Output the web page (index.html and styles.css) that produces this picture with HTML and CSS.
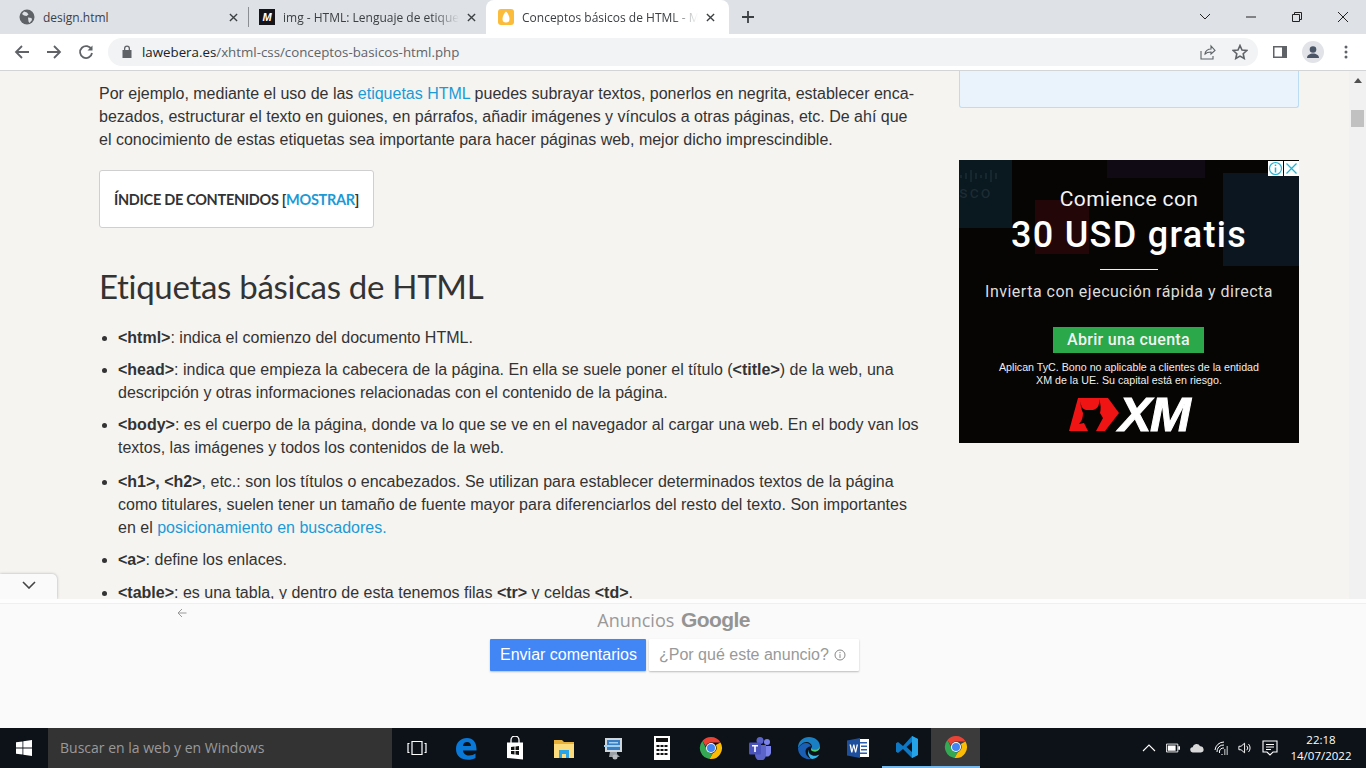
FILE: index.html
```html
<!DOCTYPE html>
<html lang="es">
<head>
    <meta charset="UTF-8">
    <meta name="viewport" content="width=device-width, initial-scale=1.0">
    <title>Conceptos básicos de HTML</title>
    <link rel="stylesheet" href="styles.css">
</head>
<body>
    <svg class="defs" width="0" height="0">
        <symbol id="chrome" viewBox="0 0 24 24">
            <path fill="#ea4335" d="M12 1a11 11 0 0 1 9.5 5.5H12a5.5 5.5 0 0 0-5.2 3.7L3.4 5A11 11 0 0 1 12 1z"/>
            <path fill="#34a853" d="M3.4 5l4.7 8.9a5.5 5.5 0 0 0 5.600 3.400L10.500 22.900A11 11 0 0 1 3.400 5z"/>
            <path fill="#fbbc05" d="M21.500 6.500A11 11 0 0 1 10.500 22.900l3.300-5.700A5.500 5.500 0 0 0 16.800 9z"/>
            <circle cx="12" cy="12" r="5" fill="#fff"/>
            <circle cx="12" cy="12" r="4" fill="#4285f4"/>
        </symbol>
    </svg>

    <!-- Tabs -->
    <div class="tabstrip">
        <div class="tab tab-first">
            <svg class="favicon" viewBox="0 0 16 16"><circle cx="8" cy="8" r="7.500" fill="#5f6368"/><path fill="#dee1e6" d="M5 2.500l3 1 1.500 2-2 1.500-2.500-.5-2-1.500zM9 8.500l3.500.5.5 2-2.500 3-1-1.500z"/></svg>
            <span class="tab-title">design.html</span>
            <svg class="tab-close" viewBox="0 0 10 10"><path d="M1 1l8 8M9 1l-8 8"/></svg>
        </div>
        <span class="tab-sep"></span>
        <div class="tab tab-second">
            <span class="favicon mdn">M</span>
            <span class="tab-title">img - HTML: Lenguaje de etiquet</span>
            <svg class="tab-close" viewBox="0 0 10 10"><path d="M1 1l8 8M9 1l-8 8"/></svg>
        </div>
        <div class="tab tab-active">
            <svg class="favicon" viewBox="0 0 16 16"><rect width="16" height="16" rx="3" fill="#fbbc3c"/><path fill="#fff" d="M8 2.500c2 1.500 3.500 5 3.500 7.500a3.500 3.500 0 0 1-7 0c0-2.500 1.500-6 3.500-7.500z"/></svg>
            <span class="tab-title">Conceptos básicos de HTML - Ma</span>
            <svg class="tab-close" viewBox="0 0 10 10"><path d="M1 1l8 8M9 1l-8 8"/></svg>
        </div>
        <svg class="new-tab" viewBox="0 0 12 12"><path d="M6 0v12M0 6h12"/></svg>
        <div class="window-controls">
            <svg viewBox="0 0 46 14"><path d="M18 4l5 5 5-5"/></svg>
            <svg viewBox="0 0 46 14"><path d="M18 7h10"/></svg>
            <svg viewBox="0 0 46 14"><path d="M18.500 4.500h7v7h-7zM20.500 4.500v-2h7v7h-2"/></svg>
            <svg viewBox="0 0 46 14"><path d="M18 2l10 10M28 2l-10 10"/></svg>
        </div>
    </div>

    <!-- Toolbar -->
    <div class="toolbar">
        <svg class="tool" viewBox="0 0 16 16"><path d="M15 8H2M8 2L2 8l6 6"/></svg>
        <svg class="tool" viewBox="0 0 16 16"><path d="M1 8h13M8 2l6 6-6 6"/></svg>
        <svg class="tool" viewBox="0 0 16 16"><path d="M13.500 5.500A6 6 0 1 0 14 9"/><path class="solid" d="M14.500 1.500v5h-5z"/></svg>
        <div class="omnibox">
            <svg class="lock" viewBox="0 0 10 13"><path d="M2 5V3.500a3 3 0 0 1 6 0V5h1.500v8H.5V5zm1.300 0h3.400V3.500a1.700 1.700 0 0 0-3.400 0z"/></svg>
            <span class="url"><span class="url-host">lawebera.es</span>/xhtml-css/conceptos-basicos-html.php</span>
            <svg class="omni-icon" viewBox="0 0 16 16"><path d="M1 7v8h12v-3M5 10c0-3 3-5 6-5V2l4 4.500L11 10V8c-2.500 0-4.500.5-6 2z"/></svg>
            <svg class="omni-icon star" viewBox="0 0 16 16"><path d="M8 1.500l2 4.500 4.800.5-3.600 3.200 1 4.800L8 12.100l-4.200 2.400 1-4.800L1.200 6.500 6 6z"/></svg>
        </div>
        <svg class="panel" viewBox="0 0 14 12"><path fill="#5f6368" d="M0 0h14v12H0z"/><path fill="#fff" d="M1.500 1.500H9v9H1.500z"/></svg>
        <svg class="avatar" viewBox="0 0 22 22"><circle cx="11" cy="11" r="11" fill="#e1e3e8"/><circle cx="11" cy="8.500" r="3.300" fill="#4a5568"/><path fill="#4a5568" d="M5 17c0-3 3-4.500 6-4.500s6 1.500 6 4.500z"/></svg>
        <svg class="menu" viewBox="0 0 4 14"><circle cx="2" cy="2" r="1.500"/><circle cx="2" cy="7" r="1.500"/><circle cx="2" cy="12" r="1.500"/></svg>
    </div>

    <!-- Page -->
    <div class="viewport">
        <div class="page">
            <main class="article">
                <p>Por ejemplo, mediante el uso de las <a href="#">etiquetas HTML</a> puedes subrayar textos, ponerlos en negrita, establecer enca-<br>bezados, estructurar el texto en guiones, en párrafos, añadir imágenes y vínculos a otras páginas, etc. De ahí que<br>el conocimiento de estas etiquetas sea importante para hacer páginas web, mejor dicho imprescindible.</p>
                <div class="toc">ÍNDICE DE CONTENIDOS [<a href="#">MOSTRAR</a>]</div>
                <h2>Etiquetas básicas de HTML</h2>
                <ul>
                    <li><b>&lt;html&gt;</b>: indica el comienzo del documento HTML.</li>
                    <li><b>&lt;head&gt;</b>: indica que empieza la cabecera de la página. En ella se suele poner el título (<b>&lt;title&gt;</b>) de la web, una<br>descripción y otras informaciones relacionadas con el contenido de la página.</li>
                    <li class="gap-wide"><b>&lt;body&gt;</b>: es el cuerpo de la página, donde va lo que se ve en el navegador al cargar una web. En el body van los<br>textos, las imágenes y todos los contenidos de la web.</li>
                    <li><b>&lt;h1&gt;, &lt;h2&gt;</b>, etc.: son los títulos o encabezados. Se utilizan para establecer determinados textos de la página<br>como titulares, suelen tener un tamaño de fuente mayor para diferenciarlos del resto del texto. Son importantes<br>en el <a href="#">posicionamiento en buscadores.</a></li>
                    <li class="gap-mid"><b>&lt;a&gt;</b>: define los enlaces.</li>
                    <li><b>&lt;table&gt;</b>: es una tabla, y dentro de esta tenemos filas <b>&lt;tr&gt;</b> y celdas <b>&lt;td&gt;</b>.</li>
                </ul>
            </main>

            <aside class="sidebar">
                <div class="note"></div>
                <div class="ad">
                    <span class="ad-bg ad-bg-cisco">
                        <svg viewBox="0 0 38 12"><path d="M2 5v3M7 3v6M12 0v12M17 3v6M22 5v3M27 3v6M32 0v12M37 3v6"/></svg>
                        sco
                    </span>
                    <span class="ad-bg ad-bg-red"></span>
                    <span class="ad-bg ad-bg-purple"></span>
                    <span class="ad-bg ad-bg-blue"></span>
                    <div class="ad-badges">
                        <svg viewBox="0 0 15 15"><circle cx="7.500" cy="7.500" r="6" fill="none" stroke="#1eb4d8" stroke-width="1.200"/><path stroke="#1eb4d8" stroke-width="1.500" d="M7.500 6.500v5M7.500 3.500v1.500"/></svg>
                        <svg viewBox="0 0 15 15"><path stroke="#1eb4d8" stroke-width="1.300" d="M2.500 2.500l10 10M12.500 2.500l-10 10"/></svg>
                    </div>
                    <div class="ad-intro">Comience con</div>
                    <div class="ad-title">30 USD gratis</div>
                    <div class="ad-rule"></div>
                    <div class="ad-sub">Invierta con ejecución rápida y directa</div>
                    <div class="ad-cta">Abrir una cuenta</div>
                    <div class="ad-legal">Aplican TyC. Bono no aplicable a clientes de la entidad<br>XM de la UE. Su capital está en riesgo.</div>
                    <div class="ad-logo">
                        <svg viewBox="0 0 50 33"><path fill="#f01414" d="M9 0h30l11 15-14 18H0z"/><path fill="#070404" d="M12 1c-1 6 1 10 5 11h7c4-1 7-4 6-11 2 6 2 10 1 14l3 5-7 13h-8l-4-8-5 1c3-3 4-7 4-11-2-4-3-9-2-14z"/></svg>
                        <span>XM</span>
                    </div>
                </div>
            </aside>
        </div>

        <div class="scrollbar">
            <svg viewBox="0 0 8 5"><path d="M4 0l4 5H0z"/></svg>
            <span class="scroll-thumb"></span>
        </div>

        <!-- Anchor ad -->
        <div class="anchor-toggle">
            <svg viewBox="0 0 14 8"><path d="M1 1l6 6 6-6"/></svg>
        </div>
        <div class="anchor">
            <div class="anchor-strip"></div>
            <svg class="anchor-back" viewBox="0 0 10 10"><path d="M9.500 5H1M5 1L1 5l4 4"/></svg>
            <div class="anchor-label">Anuncios <span class="google">Google</span></div>
            <div class="anchor-buttons">
                <span class="btn btn-blue">Enviar comentarios</span>
                <span class="btn btn-white">¿Por qué este anuncio?
                    <svg viewBox="0 0 12 12"><circle cx="6" cy="6" r="5"/><path d="M6 5.200v3.800M6 3v1.200"/></svg>
                </span>
            </div>
        </div>
    </div>

    <!-- Taskbar -->
    <div class="taskbar">
        <div class="start">
            <svg viewBox="0 0 16 16"><path fill="#fff" d="M0 2.300l6.500-.9v6.200H0zM7.300 1.300L16 0v7.600H7.300zM0 8.400h6.500v6.200L0 13.700zM7.300 8.400H16V16l-8.700-1.300z"/></svg>
        </div>
        <div class="search">Buscar en la web y en Windows</div>
        <div class="task-icons">
            <div class="task"><svg viewBox="0 0 20 18"><path fill="none" stroke="#fff" stroke-width="1.200" d="M5 2.500h10v13H5zM2.500 4.500h-1.500v9h1.500M17.500 4.500h1.500v9h-1.500"/></svg></div>
            <div class="task"><svg viewBox="0 0 24 24"><path fill="#0a78d7" d="M2 13C2 6 7 2 13 2c6 0 9.500 4.500 9.500 11v1.500H9c.3 3.500 3 5 6 5 2.500 0 5-.8 6.500-2v4.500c-2 1.200-4.500 1.800-7.500 1.800C7 23.800 2 20 2 13zm7-3h8c0-2.500-1.500-4-4-4s-3.800 1.500-4 4z"/></svg></div>
            <div class="task"><svg viewBox="0 0 24 24"><path fill="none" stroke="#fff" stroke-width="1.300" d="M8 7V4a4 4 0 0 1 8 0v3"/><path fill="#fff" d="M4 6.500h16v17l-16-1.500z"/><path fill="#111" d="M8 11l3.500-.5V14H8zM12.500 10.400L16 10v4h-3.500zM8 15h3.500v3.500L8 18zM12.500 15H16v4l-3.500-.4z"/></svg></div>
            <div class="task"><svg viewBox="0 0 24 24"><path fill="#e8b23a" d="M2 4h8l2 2h10v4H2z"/><path fill="#fcdc7c" d="M2 8h20v14H2z"/><path fill="#2aa4e8" d="M7 14h10v8h-3v-4h-4v4H7z"/></svg></div>
            <div class="task"><svg viewBox="0 0 24 24"><path fill="#cfd6dc" d="M4 2h17v14H4z"/><path fill="#3a7fc4" d="M6 4h13v10H6z"/><path fill="#9fd0f0" d="M3 9h16v2H3zM8 6h9v1.500H8z"/><path fill="#9aa0a6" d="M9 16h7v2l3 3H8z"/><circle cx="14" cy="21" r="2.500" fill="#b8bcc0"/></svg></div>
            <div class="task"><svg viewBox="0 0 24 24"><path fill="#fff" d="M4 0h16v24H4z"/><path fill="#111" d="M6 2h12v4H6zM6.500 9h3v2h-3zM10.500 9h3v2h-3zM14.500 9h3v2h-3zM6.500 13h3v2h-3zM10.500 13h3v2h-3zM14.500 13h3v2h-3zM6.500 17h3v2h-3zM10.500 17h3v2h-3zM14.500 17h3v2h-3z"/></svg></div>
            <div class="task"><svg viewBox="0 0 24 24"><use href="#chrome"/></svg></div>
            <div class="task"><svg viewBox="0 0 24 24"><circle cx="19" cy="6" r="3" fill="#7b83eb"/><path fill="#7b83eb" d="M15 10h8v7a4 4 0 0 1-6 3z"/><circle cx="12" cy="4.500" r="3.500" fill="#5b65c9"/><path fill="#5b65c9" d="M7 9h11v10a5.500 5.500 0 0 1-11 0z"/><rect x="1" y="6.500" width="12" height="12" rx="1" fill="#4b53bc"/><path fill="#fff" d="M4 9h6v1.500H7.800V16H6.200v-5.500H4z"/></svg></div>
            <div class="task"><svg viewBox="0 0 24 24"><path fill="#1b7fc4" d="M1 12C1 5 6 1 12 1c6 0 11 4 11 9.500 0 3-2.500 5-5.500 5-2 0-3.500-.8-3.500-2.500 0-1 .8-1.500 1-2.500-.5-3-3-4.500-5.500-4.500C6 6 3 9 1 12z"/><path fill="#1a5fb4" d="M1 12c2-3 5-5 8-5 3 0 5 2 5 3.500-3 0-5.500 2-5.500 5 0 3 2 6 5.500 7.500C7 24 1 19 1 12z"/><path fill="#4fc96a" d="M23 10.500c0 3-2.500 5-5.500 5-2 0-3.500-.8-3.500-2.500 0-.3.100-.5.200-.8 1 2 7 3 8.800-1.700z"/><path fill="#35b5e8" d="M14 22.800c4 .5 7-1.500 8.500-4.500-2 1.500-5 2-7.500 1-3-1-4-3-3-5.500-2.500 3 .5 8 2 9z"/></svg></div>
            <div class="task"><svg viewBox="0 0 24 24"><path fill="#fff" d="M9 3h14v18H9z"/><path fill="#2b5fad" d="M11 6h10v1.500H11zM15 9.500h6V11h-6zM15 13h6v1.500h-6zM11 16.500h10V18H11z"/><path fill="#1d4f9c" d="M1 4.500L14 2v20L1 19.500z"/><path fill="#fff" d="M3.500 8.500h1.500l1 5.500 1.200-5.500h1.200l1.200 5.500 1-5.500H12l-1.800 8H9l-1.300-5.500L6.400 16.500H5.200z"/></svg></div>
            <div class="task task-open"><svg viewBox="0 0 24 24"><path fill="#0e78c4" d="M17 1l6 3v16l-6 3-9-9-5 4-2-1.200V8.200L3 7l5 4zM17 7l-5.500 5 5.500 5z"/><path fill="#25a3e8" d="M17 1l6 3v16l-6 3z"/></svg></div>
            <div class="task task-active"><svg viewBox="0 0 24 24"><use href="#chrome"/></svg></div>
        </div>
        <div class="tray">
            <svg class="tray-icon" viewBox="0 0 14 8"><path fill="none" stroke="#fff" stroke-width="1.100" d="M1 7l6-6 6 6"/></svg>
            <svg class="tray-icon" viewBox="0 0 16 10"><path fill="none" stroke="#fff" d="M.5.500h13v9H.5z"/><path fill="#fff" d="M2 2h9v6H2zM14 3h2v4h-2z"/></svg>
            <svg class="tray-icon" viewBox="0 0 16 10"><path fill="#d8d8d8" d="M3.500 10a3 3 0 0 1-.5-6 4.500 4.500 0 0 1 8.500-1A3.500 3.500 0 0 1 12.500 10z"/></svg>
            <svg class="tray-icon" viewBox="0 0 14 14"><path fill="none" stroke="#fff" d="M1 9a9 9 0 0 1 9-8M3 11a6.500 6.500 0 0 1 7-7M5.500 12a4 4 0 0 1 4.500-5"/><path fill="#fff" d="M7 13h2v1H7zM10 8h1.500v6H10zM12.500 5H14v9h-1.500z" opacity=".55"/></svg>
            <svg class="tray-icon" viewBox="0 0 16 14"><path fill="none" stroke="#fff" stroke-width="1.100" d="M1 5h2.500L7.500 1.500v11L3.500 9H1zM10 4.500a3.500 3.500 0 0 1 0 5M12 2.500a6.500 6.500 0 0 1 0 9"/></svg>
            <svg class="tray-icon tray-note" viewBox="0 0 16 16"><path fill="none" stroke="#fff" stroke-width="1.100" d="M1 1h14v11h-4l-3 3-3-3H1zM4 4.500h8M4 7h8M4 9.500h5"/></svg>
            <div class="clock">22:18<br>14/07/2022</div>
        </div>
    </div>
</body>
</html>
```

FILE: styles.css
```css
/* Reset styles */
* {
    margin: 0;
    padding: 0;
    box-sizing: border-box;
}

html, body {
    height: 100%;
    overflow: hidden;
}

body {
    display: flex;
    flex-direction: column;
    font-family: "Liberation Sans", Arial, sans-serif;
    color: #333;
    background: #f5f4f1;
}

.defs {
    display: block;
    height: 0;
}

a {
    color: #1b9ad6;
    text-decoration: none;
}

/* Tabs */
.tabstrip {
    display: flex;
    align-items: center;
    height: 34px;
    flex: none;
    background: #dee1e6;
    font-family: "Open Sans", "Liberation Sans", sans-serif;
    font-size: 12px;
    color: #3c4043;
}

.tab {
    display: flex;
    align-items: center;
    height: 34px;
}

.tab-first {
    width: 241px;
    padding: 0 3px 0 19px;
}

.tab-sep {
    width: 1px;
    height: 20px;
    margin: 0 3px 0 7px;
    background: #8b8e92;
}

.tab-second {
    width: 234px;
    padding-left: 7px;
    padding-right: 10px;
}

.tab-active {
    width: 243px;
    padding-left: 12px;
    padding-right: 14px;
    background: #fff;
    border-radius: 8px 8px 0 0;
}

.favicon {
    width: 16px;
    height: 16px;
    flex: none;
    margin-right: 8px;
}

.mdn {
    background: #15141a;
    color: #fff;
    font: italic bold 11px/16px "Liberation Sans", sans-serif;
    text-align: center;
}

.tab-title {
    flex: 1;
    min-width: 0;
    white-space: nowrap;
    -webkit-mask-image: linear-gradient(to right, #000 85%, transparent);
    mask-image: linear-gradient(to right, #000 85%, transparent);
}

.tab-first .tab-title {
    -webkit-mask-image: none;
    mask-image: none;
}

.tab-close {
    width: 9px;
    height: 9px;
    flex: none;
    margin-left: 8px;
    fill: none;
    stroke: #3c4043;
    stroke-width: 1.500;
}

.new-tab {
    width: 12px;
    height: 12px;
    margin-left: 13px;
    fill: none;
    stroke: #3c4043;
    stroke-width: 1.800;
}

.window-controls {
    display: flex;
    margin-left: auto;
}

.window-controls svg {
    width: 46px;
    height: 14px;
    fill: none;
    stroke: #222;
    stroke-width: 1;
}

/* Toolbar */
.toolbar {
    display: flex;
    align-items: center;
    height: 37px;
    flex: none;
    padding: 0 0 1px 14px;
    background: #fff;
    border-bottom: 1px solid #d3d4d6;
}

.tool {
    width: 16px;
    height: 16px;
    flex: none;
    margin-right: 16px;
    fill: none;
    stroke: #5f6368;
    stroke-width: 1.800;
}

.tool .solid {
    fill: #5f6368;
    stroke: none;
}

.omnibox {
    display: flex;
    align-items: center;
    width: 1150px;
    height: 28px;
    margin-left: -2px;
    padding: 0 10px 0 14px;
    background: #f1f3f4;
    border-radius: 14px;
    font-family: "Open Sans", "Liberation Sans", sans-serif;
    font-size: 13.300px;
    color: #5f6368;
}

.lock {
    width: 10px;
    height: 13px;
    margin-right: 10px;
    fill: #5f6368;
}

.url {
    flex: 1;
}

.url-host {
    color: #202124;
}

.omni-icon {
    width: 16px;
    height: 16px;
    margin-left: 16px;
    fill: none;
    stroke: #5f6368;
    stroke-width: 1.100;
}

.star {
    stroke-width: 1.600;
}

.panel {
    width: 14px;
    height: 12px;
    margin-left: 15px;
}

.avatar {
    width: 22px;
    height: 22px;
    margin-left: 15px;
}

.menu {
    width: 4px;
    height: 14px;
    margin-left: 20px;
    fill: #5f6368;
}

/* Page */
.viewport {
    position: relative;
    flex: 1;
    overflow: hidden;
}

.page {
    display: flex;
    align-items: flex-start;
    padding-left: 99px;
}

.article {
    width: 820px;
    padding-top: 11px;
    font-size: 16px;
    line-height: 23px;
    white-space: nowrap;
}

.toc {
    display: flex;
    align-items: center;
    width: 275px;
    height: 58px;
    margin-top: 19px;
    padding-left: 14px;
    background: #fff;
    border: 1px solid #cfcfcf;
    border-radius: 3px;
    font-family: "Lato", "Liberation Sans", sans-serif;
    font-size: 14.500px;
    font-weight: 700;
    letter-spacing: -.3px;
    color: #333;
    white-space: pre;
}

h2 {
    margin-top: 34px;
    font-family: "Lato", "Liberation Sans", sans-serif;
    font-size: 33px;
    font-weight: 400;
    font-variant-ligatures: none;
    line-height: 48px;
    letter-spacing: -.3px;
    color: #333;
}

ul {
    margin-top: 16px;
    padding-left: 19px;
}

li {
    margin-bottom: 9px;
}

li.gap-wide {
    margin-bottom: 11px;
}

li.gap-mid {
    margin-bottom: 10px;
}

/* Sidebar */
.sidebar {
    width: 340px;
    margin-left: 40px;
}

.note {
    height: 37px;
    background: #eaf2fb;
    border: 1px solid #bcdcf2;
    border-top: 0;
    border-radius: 0 0 3px 3px;
}

.ad {
    position: relative;
    display: flex;
    flex-direction: column;
    align-items: center;
    height: 283px;
    margin-top: 52px;
    padding-top: 27px;
    overflow: hidden;
    background: #070404;
    font-family: Roboto, "Liberation Sans", sans-serif;
    color: #f4f4f4;
}

.ad > div {
    position: relative;
}

.ad-bg {
    position: absolute;
}

.ad-bg-cisco {
    top: 0;
    left: 0;
    width: 53px;
    height: 68px;
    padding-top: 10px;
    background: #0a1820;
    color: #1d2c34;
    font-size: 17px;
    line-height: 20px;
    letter-spacing: 2px;
}

.ad-bg-cisco svg {
    display: block;
    width: 38px;
    height: 12px;
    fill: none;
    stroke: #1d2c34;
    stroke-width: 1.500;
}

.ad-bg-red {
    top: 40px;
    left: 76px;
    width: 54px;
    height: 54px;
    background: #220608;
}

.ad-bg-purple {
    top: 0;
    left: 148px;
    width: 98px;
    height: 18px;
    background: #100a14;
}

.ad-bg-blue {
    top: 13px;
    right: 0;
    width: 76px;
    height: 93px;
    background: #0b1620;
}

.ad-badges {
    position: absolute !important;
    top: 1px;
    right: 0;
    display: flex;
    gap: 1px;
}

.ad-badges svg {
    width: 15px;
    height: 15px;
    background: #fff;
}

.ad-intro {
    font-size: 21px;
    line-height: 24px;
    letter-spacing: .4px;
}

.ad-title {
    margin-top: 4px;
    font-size: 36px;
    font-weight: 500;
    line-height: 40px;
    letter-spacing: 1.300px;
    color: #fff;
}

.ad-rule {
    width: 58px;
    height: 1px;
    margin-top: 14px;
    background: #eee;
}

.ad-sub {
    margin-top: 12px;
    font-size: 16px;
    line-height: 20px;
    letter-spacing: .5px;
    color: #ddd;
}

.ad-cta {
    width: 151px;
    height: 26px;
    margin-top: 25px;
    margin-right: 1px;
    background: #2ba84a;
    font-size: 16px;
    font-weight: 500;
    line-height: 26px;
    letter-spacing: .3px;
    text-align: center;
    color: #f2f2f2;
}

.ad-legal {
    margin-top: 8px;
    font-family: "Liberation Sans", sans-serif;
    font-size: 10.700px;
    line-height: 13px;
    text-align: center;
    color: #eee;
}

.ad-logo {
    display: flex;
    align-items: center;
    height: 33px;
    margin-top: 11px;
}

.ad-logo svg {
    width: 50px;
    height: 33px;
}

.ad-logo span {
    font-family: "Liberation Sans", sans-serif;
    font-size: 49px;
    font-style: italic;
    font-weight: 700;
    line-height: 33px;
    letter-spacing: -1.500px;
    color: #fff;
    -webkit-text-stroke: 1px #fff;
}

/* Scrollbar */
.scrollbar {
    position: absolute;
    top: 0;
    right: 0;
    bottom: 0;
    width: 17px;
    background: #f1f1f1;
}

.scrollbar svg {
    display: block;
    width: 8px;
    height: 5px;
    margin: 7px auto 0;
    fill: #505050;
}

.scroll-thumb {
    display: block;
    width: 13px;
    height: 17px;
    margin: 27px 0 0 2px;
    background: #c1c1c1;
}

/* Anchor ad */
.anchor {
    position: absolute;
    left: 0;
    right: 0;
    bottom: 0;
    display: flex;
    flex-direction: column;
    align-items: center;
    height: 129px;
    padding-right: 19px;
    background: #fafafa;
}

.anchor-strip {
    align-self: stretch;
    height: 5px;
    margin-right: -19px;
    background: #fdfdfd;
    border-bottom: 1px solid #efefef;
}

.anchor-toggle {
    position: absolute;
    left: 0;
    bottom: 129px;
    display: flex;
    align-items: center;
    justify-content: center;
    width: 57px;
    height: 25px;
    padding-bottom: 4px;
    background: #fafafa;
    border-radius: 0 5px 0 0;
    box-shadow: 0 0 3px rgba(0, 0, 0, .3);
}

.anchor-toggle svg {
    width: 14px;
    height: 8px;
    fill: none;
    stroke: #444;
    stroke-width: 1.600;
}

.anchor-back {
    position: absolute;
    top: 9px;
    left: 177px;
    width: 10px;
    height: 10px;
    fill: none;
    stroke: #999;
}

.anchor-label {
    margin-top: 5px;
    font-family: "Open Sans", "Liberation Sans", sans-serif;
    font-size: 18px;
    line-height: 22px;
    color: #999;
}

.google {
    margin-left: 2px;
    font-family: "Liberation Sans", sans-serif;
    font-size: 21px;
    font-weight: 700;
    letter-spacing: -.6px;
    color: #949494;
}

.anchor-buttons {
    display: flex;
    gap: 3px;
    margin-top: 8px;
    margin-left: 2px;
}

.btn {
    display: flex;
    align-items: center;
    gap: 5px;
    height: 32px;
    padding: 0 10px;
    font-size: 16px;
    white-space: nowrap;
    border-radius: 1px;
    box-shadow: 0 1px 2px rgba(0, 0, 0, .25);
}

.btn-blue {
    width: 156px;
    background: #4285f4;
    color: #fff;
}

.btn-white {
    width: 210px;
    background: #fff;
    color: #999;
}

.btn-white svg {
    width: 12px;
    height: 12px;
    fill: none;
    stroke: #888;
}

/* Taskbar */
.taskbar {
    display: flex;
    height: 40px;
    flex: none;
    background: #0c1218;
    color: #fff;
}

.start {
    display: flex;
    align-items: center;
    justify-content: center;
    width: 48px;
}

.start svg {
    width: 16px;
    height: 16px;
}

.search {
    width: 344px;
    padding-left: 12px;
    background: #333;
    font-family: "Open Sans", "Liberation Sans", sans-serif;
    font-size: 14px;
    line-height: 40px;
    color: #9a9a9a;
}

.task-icons {
    display: flex;
}

.task {
    display: flex;
    align-items: center;
    justify-content: center;
    width: 49px;
    height: 40px;
}

.task svg {
    width: 24px;
    height: 24px;
}

.task:first-child svg {
    width: 20px;
    height: 18px;
}

.task-open {
    border-bottom: 2px solid #76b9ed;
}

.task-active {
    background: #3b3b3b;
    border-bottom: 2px solid #76b9ed;
}

.tray {
    display: flex;
    align-items: center;
    flex: 1;
    justify-content: flex-end;
}

.tray-icon {
    width: 14px;
    height: 14px;
    margin-right: 10px;
}

.tray-note {
    width: 16px;
    height: 16px;
    margin-right: 6px;
}

.clock {
    width: 74px;
    margin-right: 8px;
    font-family: "Open Sans", "Liberation Sans", sans-serif;
    font-size: 11.500px;
    line-height: 16px;
    text-align: center;
}
```
